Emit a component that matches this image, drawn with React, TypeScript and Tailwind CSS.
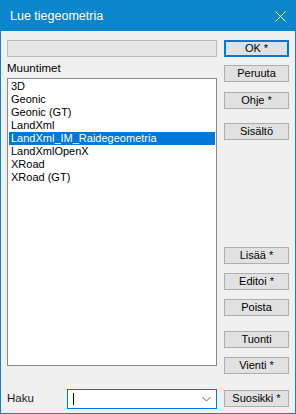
import React, { useState } from 'react';

// Entries shown in the converter list
const converters = [
    '3D',
    'Geonic',
    'Geonic (GT)',
    'LandXml',
    'LandXml_IM_Raidegeometria',
    'LandXmlOpenX',
    'XRoad',
    'XRoad (GT)',
];

interface DlgButtonProps {
    label: string;
    className?: string;
    isDefault?: boolean;
}

// Classic Windows push button
const DlgButton: React.FC<DlgButtonProps> = ({ label, className = '', isDefault }) => (
    <button
        className={
            'w-[65px] h-[17px] flex items-center justify-center bg-[#e1e1e1] text-[11px] leading-none text-black ' +
            (isDefault ? 'border-2 border-[#0078d7] ' : 'border border-[#adadad] ') +
            className
        }
    >
        {label}
    </button>
);

export default function App() {
    const [selected, setSelected] = useState(4);

    return (
        <div
            className="w-[296px] h-[414px] flex flex-col border border-[#0b86cd] bg-[#f0f0f0] overflow-hidden"
            style={{ fontFamily: '"Liberation Sans", Arial, sans-serif' }}
        >
            {/* Title bar */}
            <div className="h-[30px] shrink-0 bg-[#0b86cd] flex items-center justify-between pl-[9px] pr-[9px]">
                <span className="text-white text-[12.5px] pt-[1px]">Lue tiegeometria</span>
                <svg width="11" height="11" viewBox="0 0 11 11" className="mt-[1px]">
                    <path d="M0.5 0.5 L10.5 10.5 M10.5 0.5 L0.5 10.5" stroke="#ffffff" strokeWidth="1" />
                </svg>
            </div>

            {/* Body */}
            <div className="flex flex-1 pl-[6px] pt-[9px]">
                {/* Left column */}
                <div className="w-[210px] flex flex-col">
                    <div className="h-[17px] bg-[#e6e6e6] border border-[#bcbcbc]" />
                    <div className="mt-[4px] h-[15px] text-[11.5px] leading-[15px] text-black">Muuntimet</div>
                    <div className="mt-[2px] h-[288px] bg-white border border-[#828790] pt-[1px] px-[1px]">
                        {converters.map((name, i) => (
                            <div
                                key={name}
                                onClick={() => setSelected(i)}
                                className={
                                    'h-[13px] leading-[13px] text-[11px] pl-[2px] whitespace-nowrap ' +
                                    (i === selected ? 'bg-[#0078d7] text-white' : 'text-black')
                                }
                            >
                                {name}
                            </div>
                        ))}
                    </div>
                    {/* Search row */}
                    <div className="mt-[23px] h-[20px] flex items-center">
                        <span className="w-[60px] text-[11.5px] text-[#1a1a1a]">Haku</span>
                        <div className="flex-1 h-[20px] bg-white border border-[#0078d7] flex items-center justify-between pl-[5px] pr-[5px]">
                            <div className="w-[1px] h-[12px] bg-black" />
                            <svg width="9" height="6" viewBox="0 0 9 6">
                                <path d="M0.5 1 L4.5 5 L8.5 1" stroke="#606060" strokeWidth="1" fill="none" />
                            </svg>
                        </div>
                    </div>
                </div>

                {/* Right column of buttons */}
                <div className="ml-[7px] flex flex-col">
                    <DlgButton label="OK *" isDefault />
                    <DlgButton label="Peruuta" className="mt-[8px]" />
                    <DlgButton label="Ohje *" className="mt-[10px]" />
                    <DlgButton label="Sisältö" className="mt-[14px]" />
                    <DlgButton label="Lisää *" className="mt-[107px]" />
                    <DlgButton label="Editoi *" className="mt-[9px]" />
                    <DlgButton label="Poista" className="mt-[9px]" />
                    <DlgButton label="Tuonti" className="mt-[15px]" />
                    <DlgButton label="Vienti *" className="mt-[9px]" />
                    <DlgButton label="Suosikki *" className="mt-[16px]" />
                </div>
            </div>
        </div>
    );
}
